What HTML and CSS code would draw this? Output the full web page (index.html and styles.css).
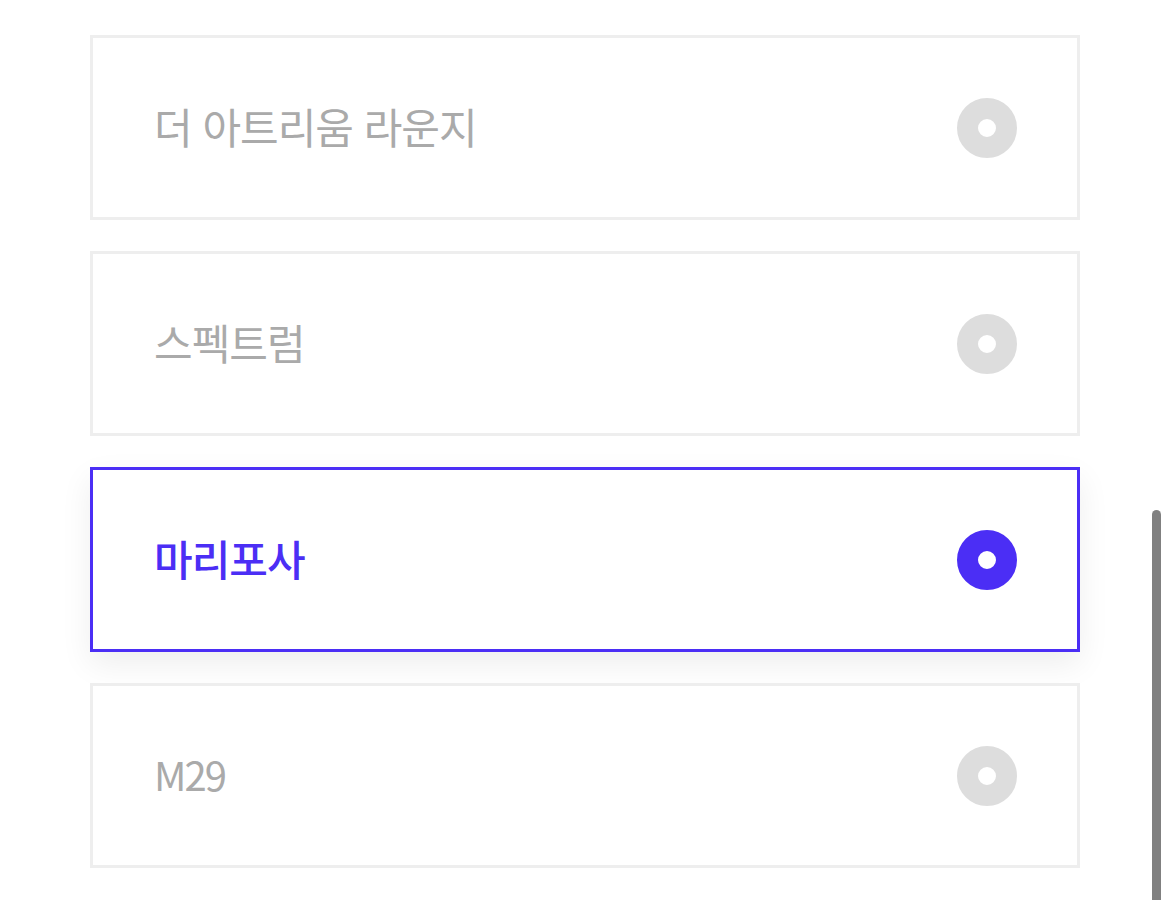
FILE: index.html
```html
<!DOCTYPE html>
<html lang="ko">
<head>
    <meta charset="UTF-8">
    <meta name="viewport" content="width=device-width, initial-scale=1"/>
    <title>라운지 선택</title>
    <link rel="stylesheet" href="styles.css">
</head>
<body>
    <ul class="option-list">
        <li class="option-item">
            <span class="option-name">더 아트리움 라운지</span>
            <span class="option-radio"></span>
        </li>
        <li class="option-item">
            <span class="option-name">스펙트럼</span>
            <span class="option-radio"></span>
        </li>
        <li class="option-item is-active">
            <span class="option-name">마리포사</span>
            <span class="option-radio"></span>
        </li>
        <li class="option-item">
            <span class="option-name option-name-latin">M29</span>
            <span class="option-radio"></span>
        </li>
    </ul>
    <div class="scroll-thumb"></div>
</body>
</html>
```

FILE: styles.css
```css
html, body{
    margin: 0;
    padding: 0;
    background-color: #fff;
}
body{
    font-family: "Noto Sans CJK KR", "Noto Sans", sans-serif;
}
.option-list{
    list-style: none;
    margin: 35px 0 0 90px;
    padding: 0;
    width: 990px;
    display: flex;
    flex-direction: column;
    gap: 31px;
}
.option-item{
    box-sizing: border-box;
    height: 185px;
    border: 3px solid #eee;
    background-color: #fff;
    display: flex;
    align-items: center;
    justify-content: space-between;
    padding: 0 60px 0 61px;
}
.option-name{
    font-size: 42px;
    font-weight: 400;
    letter-spacing: -1px;
    color: #aaa;
    line-height: 1;
    margin-top: -4px;
}
.option-name-latin{
    font-size: 40px;
    letter-spacing: -2px;
}
.option-radio{
    box-sizing: border-box;
    width: 60px;
    height: 60px;
    border-radius: 50%;
    border: 21px solid #ddd;
    background-color: #fff;
}
.option-item.is-active{
    border-color: #4b2ef5;
    box-shadow: 0 12px 30px rgba(0, 0, 0, 0.07);
}
.option-item.is-active .option-name{
    color: #4b2ef5;
    font-weight: 500;
}
.option-item.is-active .option-radio{
    border-color: #4b2ef5;
}
.scroll-thumb{
    position: fixed;
    left: 1152px;
    top: 510px;
    width: 9px;
    height: 420px;
    border-radius: 5px;
    background-color: #808080;
}
```
